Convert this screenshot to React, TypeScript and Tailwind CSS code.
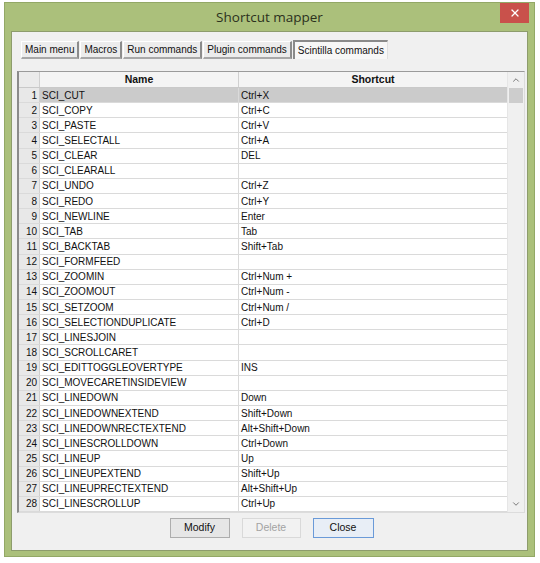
import { ChevronUp, ChevronDown, X } from "lucide-react";

const rows: [string, string][] = [
  ["SCI_CUT", "Ctrl+X"],
  ["SCI_COPY", "Ctrl+C"],
  ["SCI_PASTE", "Ctrl+V"],
  ["SCI_SELECTALL", "Ctrl+A"],
  ["SCI_CLEAR", "DEL"],
  ["SCI_CLEARALL", ""],
  ["SCI_UNDO", "Ctrl+Z"],
  ["SCI_REDO", "Ctrl+Y"],
  ["SCI_NEWLINE", "Enter"],
  ["SCI_TAB", "Tab"],
  ["SCI_BACKTAB", "Shift+Tab"],
  ["SCI_FORMFEED", ""],
  ["SCI_ZOOMIN", "Ctrl+Num +"],
  ["SCI_ZOOMOUT", "Ctrl+Num -"],
  ["SCI_SETZOOM", "Ctrl+Num /"],
  ["SCI_SELECTIONDUPLICATE", "Ctrl+D"],
  ["SCI_LINESJOIN", ""],
  ["SCI_SCROLLCARET", ""],
  ["SCI_EDITTOGGLEOVERTYPE", "INS"],
  ["SCI_MOVECARETINSIDEVIEW", ""],
  ["SCI_LINEDOWN", "Down"],
  ["SCI_LINEDOWNEXTEND", "Shift+Down"],
  ["SCI_LINEDOWNRECTEXTEND", "Alt+Shift+Down"],
  ["SCI_LINESCROLLDOWN", "Ctrl+Down"],
  ["SCI_LINEUP", "Up"],
  ["SCI_LINEUPEXTEND", "Shift+Up"],
  ["SCI_LINEUPRECTEXTEND", "Alt+Shift+Up"],
  ["SCI_LINESCROLLUP", "Ctrl+Up"],
];

const tabs = ["Main menu", "Macros", "Run commands", "Plugin commands", "Scintilla commands"];

export default function App() {
  return (
    <div className="w-[540px] h-[563px] bg-white pt-[2px] pl-[4px]">
      <div className="w-[531px] h-[555px] bg-[#abc07b] border border-[#93a866] flex flex-col">
        {/* title bar */}
        <div className="h-[28px] grid grid-cols-[1fr_auto_1fr] items-start">
          <div />
          <div className="pt-[4px] text-[13.5px] text-[#2b301d] font-['Open_Sans',sans-serif]">
            Shortcut mapper
          </div>
          <div className="flex justify-end pr-[5px]">
            <div className="w-[29px] h-[20px] bg-[#c9514b] flex items-center justify-center">
              <X size={12} strokeWidth={2.5} className="text-white" />
            </div>
          </div>
        </div>

        {/* client area */}
        <div className="mx-[6px] h-[520px] bg-[#f0f0f0] border border-[#8d9c6c] flex flex-col font-['Liberation_Sans',Arial,sans-serif]">
          <div className="flex items-end gap-[1px] pl-[9px] pt-[8px] h-[27px]">
            {tabs.map((t, i) =>
              i === tabs.length - 1 ? (
                <div
                  key={t}
                  className="h-[19px] px-[3px] flex items-center text-[10px] text-[#111] bg-[#f7f7f7] border-l-2 border-t-2 border-l-[#8a8a8a] border-t-[#8a8a8a] border-r border-r-[#e0e0e0]"
                >
                  {t}
                </div>
              ) : (
                <div
                  key={t}
                  className="h-[18px] px-[3px] flex items-center text-[10px] text-[#111] bg-[#ececec] border-r-2 border-b-2 border-r-[#8c8c8c] border-b-[#a8a8a8] border-l border-t border-l-white border-t-white"
                >
                  {t}
                </div>
              )
            )}
          </div>

          {/* grid */}
          <div className="ml-[5px] mr-[2px] mt-[12px] h-[442px] flex border-l-2 border-t border-l-[#8b8b8b] border-t-[#9a9a9a] border-r border-b border-r-[#dcdcdc] border-b-[#dcdcdc] bg-white">
            <div className="flex-1 flex flex-col">
              <div className="h-[16px] flex bg-[#f4f4f4] border-b border-[#c9c9c9] text-[10.5px] font-bold text-[#111]">
                <div className="w-[21px] border-r border-[#d0d0d0] bg-[#ebebeb]" />
                <div className="w-[199px] border-r border-[#d0d0d0] flex items-center justify-center">
                  Name
                </div>
                <div className="flex-1 flex items-center justify-center">Shortcut</div>
              </div>
              {rows.map(([name, key], i) => {
                const sel = i === 0;
                return (
                  <div
                    key={name}
                    className={
                      "h-[15.15px] flex text-[10px] text-[#111] border-b border-[#dadada] " +
                      (sel ? "bg-[#cbcbcb]" : "bg-white")
                    }
                  >
                    <div className="w-[21px] bg-[#e8e8e8] border-r border-[#cfcfcf] flex items-center justify-end pr-[2px]">
                      {i + 1}
                    </div>
                    <div className="w-[199px] border-r border-[#dadada] flex items-center pl-[2px]">
                      {name}
                    </div>
                    <div className="flex-1 flex items-center pl-[2px]">{key}</div>
                  </div>
                );
              })}
            </div>
            {/* scrollbar */}
            <div className="w-[17px] bg-[#f0f0f0] flex flex-col border-l border-[#e6e6e6]">
              <div className="h-[16px] flex items-center justify-center">
                <ChevronUp size={10} strokeWidth={2} className="text-[#606060]" />
              </div>
              <div className="h-[15px] mx-[1px] bg-[#cdcdcd]" />
              <div className="flex-1" />
              <div className="h-[16px] flex items-center justify-center">
                <ChevronDown size={10} strokeWidth={2} className="text-[#606060]" />
              </div>
            </div>
          </div>

          {/* buttons */}
          <div className="flex justify-center gap-[12px] mt-[5px] pl-[4px]">
            <div className="w-[60px] h-[20px] flex items-center justify-center text-[10.5px] text-[#111] bg-[#e6e6e6] border border-[#adadad]">
              Modify
            </div>
            <div className="w-[59px] h-[20px] flex items-center justify-center text-[10.5px] text-[#a3a3a3] bg-[#f2f2f2] border border-[#d9d9d9]">
              Delete
            </div>
            <div className="w-[61px] h-[20px] flex items-center justify-center text-[10.5px] text-[#111] bg-[#e8eef6] border border-[#6a9ad8]">
              Close
            </div>
          </div>
        </div>
      </div>
    </div>
  );
}
